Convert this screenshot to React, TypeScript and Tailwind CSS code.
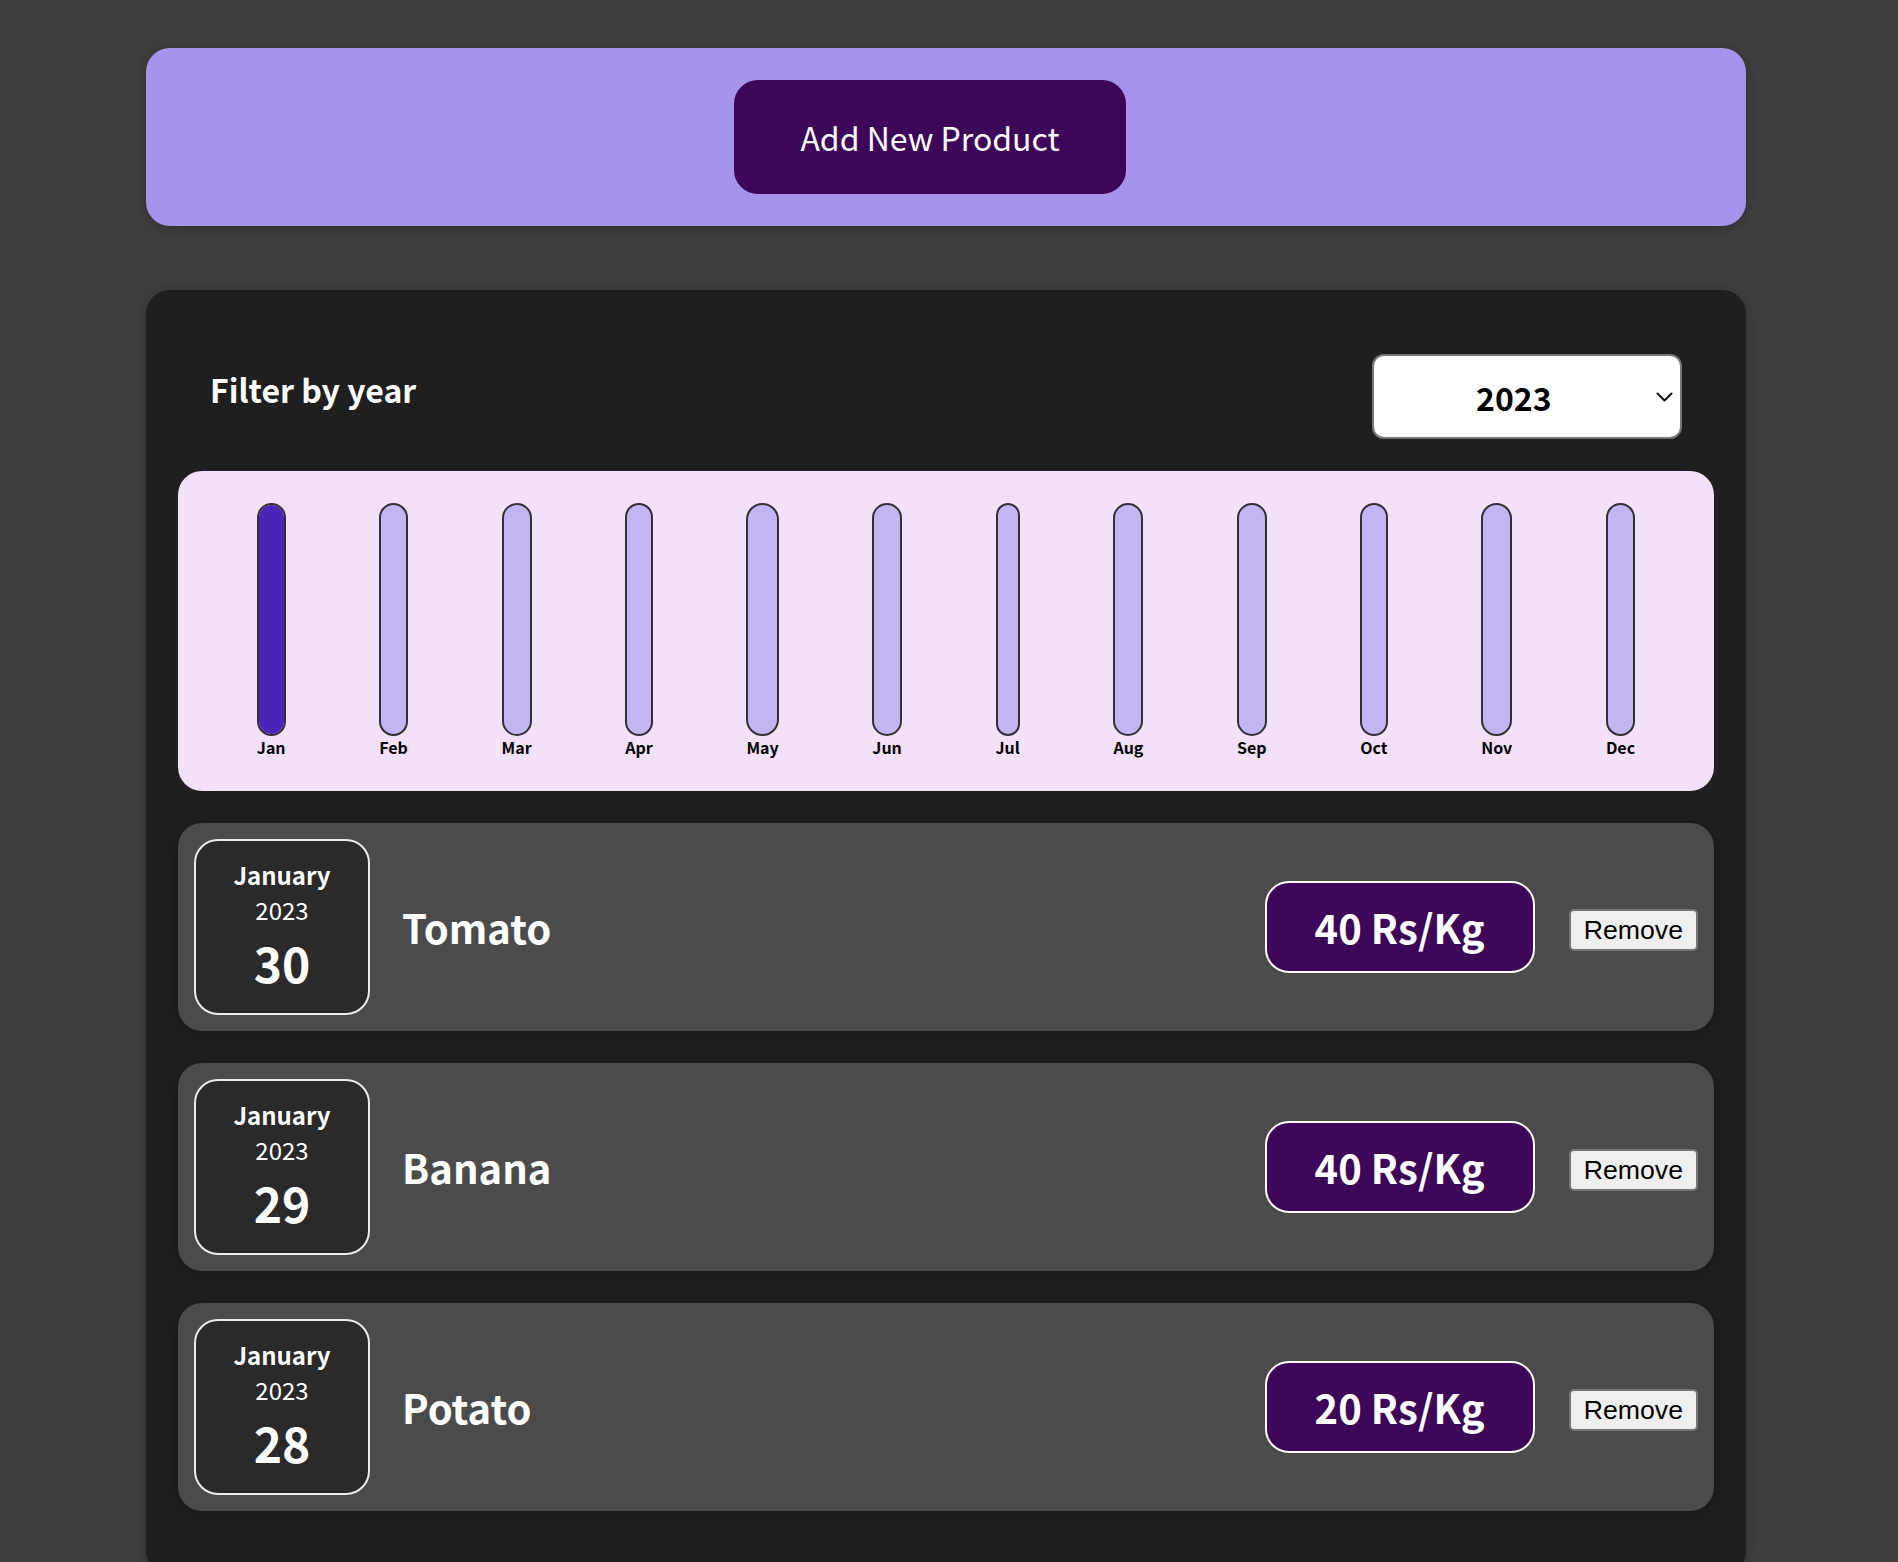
import React from "react";

const months = ["Jan", "Feb", "Mar", "Apr", "May", "Jun", "Jul", "Aug", "Sep", "Oct", "Nov", "Dec"];
const fills = [100, 0, 0, 0, 0, 0, 0, 0, 0, 0, 0, 0];

const items = [
  { title: "Tomato", day: "30", price: "40 Rs/Kg" },
  { title: "Banana", day: "29", price: "40 Rs/Kg" },
  { title: "Potato", day: "28", price: "20 Rs/Kg" },
];

function ChartBar({ label, fill }: { label: string; fill: number }) {
  return (
    <div className="flex h-full flex-col items-center">
      <div className="flex w-full flex-1 flex-col justify-end overflow-hidden rounded-[24px] border-2 border-[#313131] bg-[#c3b4f3]">
        <div className="w-full bg-[#4826b9]" style={{ height: `${fill}%` }} />
      </div>
      <div className="text-[16px] font-bold leading-[23px] text-black">{label}</div>
    </div>
  );
}

function ExpenseItem({ title, day, price }: { title: string; day: string; price: string }) {
  return (
    <div className="my-[32px] flex items-center rounded-[24px] bg-[#4b4b4b] p-[16px] shadow-[0_2px_16px_rgba(0,0,0,0.25)]">
      <div className="flex h-[176px] w-[176px] shrink-0 flex-col items-center justify-center rounded-[24px] border-2 border-[#ececec] bg-[#2a2a2a] text-white">
        <div className="text-[24px] font-bold leading-[35px]">January</div>
        <div className="text-[24px] leading-[35px]">2023</div>
        <div className="text-[48px] font-bold leading-[70px]">{day}</div>
      </div>
      <div className="flex flex-1 items-center">
        <h2 className="mx-[32px] flex-1 text-[40px] font-bold leading-[58px] text-white">{title}</h2>
        <div className="rounded-[24px] border-2 border-white bg-[#3d0659] px-[48px] py-[15px] text-[40px] font-bold leading-[58px] text-white">
          {price}
        </div>
      </div>
      <button className="ml-[34px] mt-[6px] h-[42px] rounded-[5px] border-2 border-[#767676] bg-[#efefef] px-[13px] font-['Liberation_Sans',Arial,sans-serif] text-[26.67px] leading-[30px] text-black">
        Remove
      </button>
    </div>
  );
}

export default function App() {
  return (
    <div className="min-h-screen bg-[#3f3f3f] pb-[64px] pt-[48px] font-['Noto_Sans_CJK_JP','Noto_Sans',sans-serif]">
      <div className="ml-[146px] w-[1600px] rounded-[24px] bg-[#a594ea] p-[32px] text-center shadow-[0_2px_16px_rgba(0,0,0,0.25)]">
        <button className="mr-[32px] rounded-[24px] border-2 border-[#3d0659] bg-[#3d0659] px-[64px] py-[32px] text-[32px] leading-[46px] text-white">
          Add New Product
        </button>
      </div>

      <div className="ml-[146px] mt-[64px] w-[1600px] rounded-[24px] bg-[#1f1f1f] p-[32px] shadow-[0_2px_16px_rgba(0,0,0,0.25)]">
        <div className="px-[32px] text-white">
          <div className="my-[32px] flex w-full items-center justify-between">
            <label className="mb-[16px] text-[32px] font-bold leading-[46px]">Filter by year</label>
            <div className="flex h-[85px] w-[310px] items-center rounded-[12px] border-2 border-[#767676] bg-white pl-[102px] text-[32px] font-bold leading-[46px] text-black">
              <span>2023</span>
              <svg className="ml-auto mr-[7px]" width="17" height="10" viewBox="0 0 17 10" fill="none">
                <polyline points="1.5,1.5 8.5,8.5 15.5,1.5" stroke="#111" strokeWidth="2" strokeLinecap="round" strokeLinejoin="round" />
              </svg>
            </div>
          </div>
        </div>

        <div className="flex h-[320px] justify-around rounded-[24px] bg-[#f3e0fb] p-[32px] text-center">
          {months.map((m, i) => (
            <ChartBar key={m} label={m} fill={fills[i]} />
          ))}
        </div>

        {items.map((it) => (
          <ExpenseItem key={it.title} {...it} />
        ))}
      </div>
    </div>
  );
}
